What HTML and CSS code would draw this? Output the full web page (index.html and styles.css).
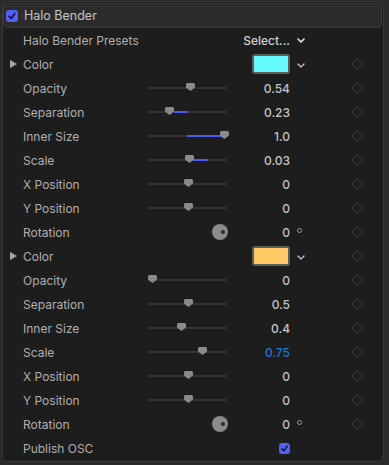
FILE: index.html
```html
<!DOCTYPE html>
<html lang="en">
<head>
    <meta charset="UTF-8">
    <meta name="viewport" content="width=device-width, initial-scale=1.0">
    <title>Halo Bender</title>
    <link rel="stylesheet" href="styles.css">
</head>
<body>

<main class="panel">
  <div class="header">
    <span class="check"><svg viewBox="0 0 12 12" width="12" height="12"><path d="M3 6.3 L5.1 8.4 L9 3.6" fill="none" stroke="#14163a" stroke-width="1.6" stroke-linecap="round" stroke-linejoin="round"/></svg></span>
    <span class="title">Halo Bender</span>
  </div>

  <div class="row">
    <span></span>
    <span class="label">Halo Bender Presets</span>
    <span></span>
    <span class="value select">Select...</span>
    <span class="extra"><svg class="chev bright" viewBox="0 0 8 5" width="8" height="5"><path d="M1 1 L4 4 L7 1" fill="none" stroke="#e6e6e6" stroke-width="1.6" stroke-linecap="round" stroke-linejoin="round"/></svg></span>
    <span></span>
  </div>

  <div class="row">
    <span class="tri"></span>
    <span class="label">Color</span>
    <span></span>
    <span class="value"><span class="swatch cyan"></span></span>
    <span class="extra"><svg class="chev low" viewBox="0 0 8 5" width="8" height="5"><path d="M1 1 L4 4 L7 1" fill="none" stroke="#b8b8b8" stroke-width="1.5" stroke-linecap="round" stroke-linejoin="round"/></svg></span>
    <span class="key"><i></i></span>
  </div>

  <div class="row">
    <span></span><span class="label">Opacity</span>
    <span class="slider"><span class="thumb" style="left:42px"></span></span>
    <span class="value">0.54</span><span></span><span class="key"><i></i></span>
  </div>
  <div class="row">
    <span></span><span class="label">Separation</span>
    <span class="slider"><span class="fill" style="left:26px;width:14px"></span><span class="thumb" style="left:21px"></span></span>
    <span class="value">0.23</span><span></span><span class="key"><i></i></span>
  </div>
  <div class="row">
    <span></span><span class="label">Inner Size</span>
    <span class="slider"><span class="fill" style="left:39px;width:36px"></span><span class="thumb" style="left:76px"></span></span>
    <span class="value">1.0</span><span></span><span class="key"><i></i></span>
  </div>
  <div class="row">
    <span></span><span class="label">Scale</span>
    <span class="slider"><span class="fill" style="left:44px;width:16px"></span><span class="thumb" style="left:41px"></span></span>
    <span class="value">0.03</span><span></span><span class="key"><i></i></span>
  </div>
  <div class="row">
    <span></span><span class="label">X Position</span>
    <span class="slider"><span class="thumb" style="left:40px"></span></span>
    <span class="value">0</span><span></span><span class="key"><i></i></span>
  </div>
  <div class="row">
    <span></span><span class="label">Y Position</span>
    <span class="slider"><span class="thumb" style="left:40px"></span></span>
    <span class="value">0</span><span></span><span class="key"><i></i></span>
  </div>
  <div class="row">
    <span></span><span class="label">Rotation</span>
    <span class="dialcell"><span class="dial"></span></span>
    <span class="value">0</span><span class="extra"><span class="deg"></span></span><span class="key"><i></i></span>
  </div>

  <div class="row">
    <span class="tri"></span>
    <span class="label">Color</span>
    <span></span>
    <span class="value"><span class="swatch orange"></span></span>
    <span class="extra"><svg class="chev low" viewBox="0 0 8 5" width="8" height="5"><path d="M1 1 L4 4 L7 1" fill="none" stroke="#b8b8b8" stroke-width="1.5" stroke-linecap="round" stroke-linejoin="round"/></svg></span>
    <span class="key"><i></i></span>
  </div>

  <div class="row">
    <span></span><span class="label">Opacity</span>
    <span class="slider"><span class="thumb" style="left:4px"></span></span>
    <span class="value">0</span><span></span><span class="key"><i></i></span>
  </div>
  <div class="row">
    <span></span><span class="label">Separation</span>
    <span class="slider"><span class="thumb" style="left:40px"></span></span>
    <span class="value">0.5</span><span></span><span class="key"><i></i></span>
  </div>
  <div class="row">
    <span></span><span class="label">Inner Size</span>
    <span class="slider"><span class="thumb" style="left:33px"></span></span>
    <span class="value">0.4</span><span></span><span class="key"><i></i></span>
  </div>
  <div class="row">
    <span></span><span class="label">Scale</span>
    <span class="slider"><span class="thumb" style="left:54px"></span></span>
    <span class="value blue">0.75</span><span></span><span class="key"><i></i></span>
  </div>
  <div class="row">
    <span></span><span class="label">X Position</span>
    <span class="slider"><span class="thumb" style="left:40px"></span></span>
    <span class="value">0</span><span></span><span class="key"><i></i></span>
  </div>
  <div class="row">
    <span></span><span class="label">Y Position</span>
    <span class="slider"><span class="thumb" style="left:40px"></span></span>
    <span class="value">0</span><span></span><span class="key"><i></i></span>
  </div>
  <div class="row">
    <span></span><span class="label">Rotation</span>
    <span class="dialcell"><span class="dial"></span></span>
    <span class="value">0</span><span class="extra"><span class="deg"></span></span><span class="key"><i></i></span>
  </div>

  <div class="row">
    <span></span><span class="label">Publish OSC</span>
    <span></span>
    <span class="value"><span class="check small"><svg viewBox="0 0 12 12" width="11" height="11"><path d="M3 6.3 L5.1 8.4 L9 3.6" fill="none" stroke="#14163a" stroke-width="1.6" stroke-linecap="round" stroke-linejoin="round"/></svg></span></span>
    <span></span><span></span>
  </div>
</main>

</body>
</html>
```

FILE: styles.css
```css
*{
  margin: 0px;
  padding: 0px;
  box-sizing: border-box;
}
body{
  background-color: #2a2a2a;
  font-family: Inter, "Liberation Sans", sans-serif;
  font-size: 12px;
  color: #afafaf;
  padding: 1px 5px 3px 2px;
}
.panel{
  background-color: #1d1d1d;
  border: 1px solid #393939;
  border-radius: 5px;
  padding-bottom: 1px;
  height: 461px;
}
.header{
  height: 25px;
  margin: 1px 1px 0 0;
  background-color: #2b2b2b;
  border: 1px solid #383838;
  border-radius: 4px;
  display: flex;
  align-items: center;
  padding-left: 2px;
  gap: 6px;
}
.title{
  color: #c3c3c3;
  font-size: 12.5px;
}
.check{
  width: 12px;
  height: 12px;
  border-radius: 3px;
  background-color: #5560f2;
  display: flex;
  align-items: center;
  justify-content: center;
}
.check.small{
  width: 11px;
  height: 11px;
}
.row{
  height: 24px;
  display: grid;
  grid-template-columns: 20px 125px 80px 62px 50px 34px;
  align-items: center;
}
.label{
  white-space: nowrap;
}
.value{
  text-align: right;
  font-weight: 500;
  color: #c4c4c4;
  display: flex;
  justify-content: flex-end;
  align-items: center;
}
.value.select{
  color: #d0d0d0;
}
.value.blue{
  color: #1f73d6;
}
.extra{
  display: flex;
  align-items: center;
  padding-left: 7px;
}
.chev{
  display: block;
}
.chev.low{
  margin-top: 3px;
}
.tri{
  width: 0;
  height: 0;
  margin-left: 7px;
  border-top: 4.5px solid transparent;
  border-bottom: 4.5px solid transparent;
  border-left: 7px solid #a8a8a8;
}
.swatch{
  width: 38px;
  height: 20px;
  border: 2px solid #5d5d5d;
  border-radius: 3px;
}
.swatch.cyan{
  background-color: #66fcff;
}
.swatch.orange{
  background-color: #ffca66;
}
.key{
  display: flex;
  justify-content: center;
}
.key i{
  width: 8px;
  height: 8px;
  border: 1px solid #363636;
  transform: rotate(45deg);
}
.slider{
  position: relative;
  height: 2px;
  background-color: #323232;
  width: 79px;
}
.fill{
  position: absolute;
  top: 0;
  height: 2px;
  background-color: #4d5af0;
}
.thumb{
  position: absolute;
  top: -4px;
  width: 9px;
  height: 8px;
  margin-left: -4px;
  background-color: #8b8b8b;
  clip-path: polygon(10% 0, 90% 0, 100% 15%, 100% 55%, 50% 100%, 0 55%, 0 15%);
}
.dialcell{
  display: flex;
  justify-content: flex-end;
}
.dial{
  width: 16px;
  height: 16px;
  border-radius: 50%;
  background-color: #8b8b8b;
  position: relative;
}
.dial::after{
  content: "";
  position: absolute;
  right: 3px;
  top: 6px;
  width: 4px;
  height: 4px;
  border-radius: 50%;
  background-color: #2a2a2a;
}
.deg{
  width: 5px;
  height: 5px;
  border: 1px solid #9a9a9a;
  border-radius: 50%;
  margin-top: -4px;
}
```
